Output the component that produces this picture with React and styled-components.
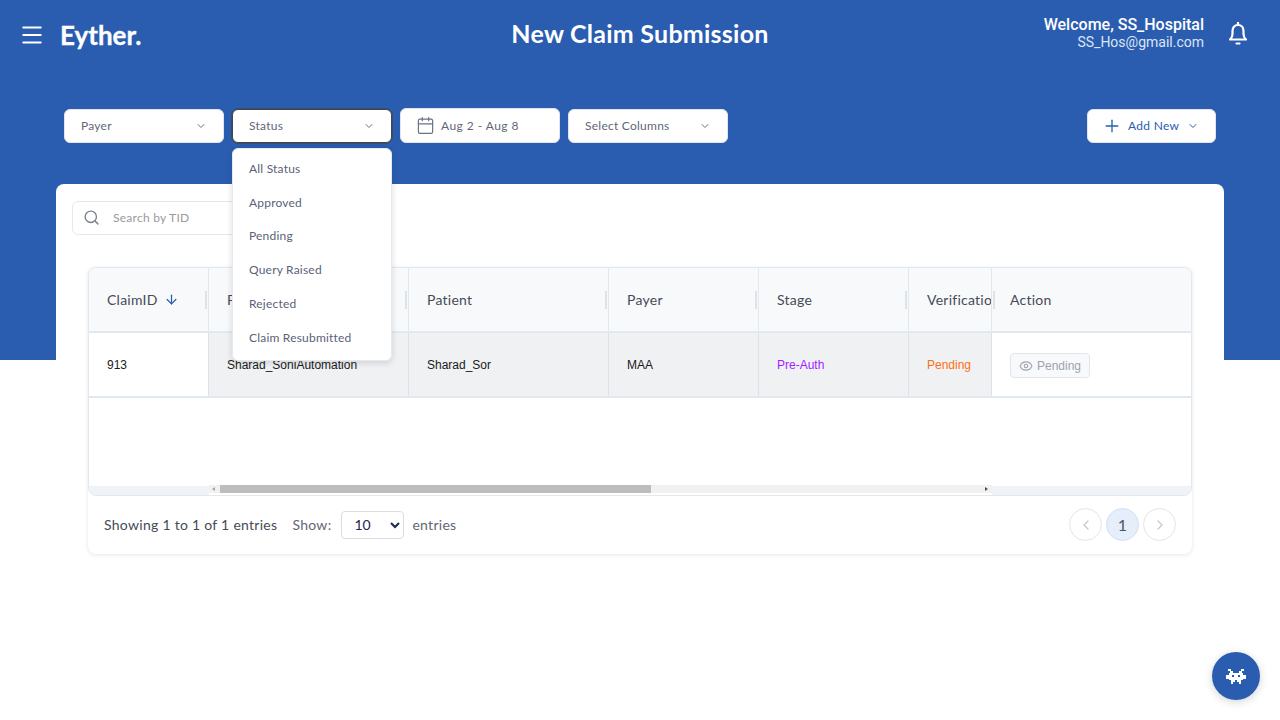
import React from 'react'
import styled, { createGlobalStyle } from 'styled-components'
import { Menu, ChevronDown, ChevronLeft, ChevronRight, Calendar, Plus, Search, ArrowDown, Eye } from 'lucide-react'

const BLUE = '#2a5db0'
const UI_FONT = '"Lato", "Noto Sans", sans-serif'

const GlobalStyle = createGlobalStyle`
  html, body { margin: 0; padding: 0; background: #fff; }
  * { box-sizing: border-box; }
`

const columns = [
  { label: 'ClaimID', sorted: true },
  { label: 'Provider' },
  { label: 'Patient' },
  { label: 'Payer' },
  { label: 'Stage' },
  { label: 'Verification', noResizer: true },
  { label: 'Action', noResizer: true, last: true },
]

const statusOptions = ['All Status', 'Approved', 'Pending', 'Query Raised', 'Rejected', 'Claim Resubmitted']

function BellIcon() {
  return (
    <svg width="18" height="23" viewBox="0 0 18 23" fill="none" stroke="#fff" strokeWidth="2.2" aria-hidden="true">
      <path d="M9 3C5.4 3 3.5 5.8 3.5 9v3c0 3-1 4.200-2.500 5.500h16c-1.500-1.300-2.500-2.500-2.500-5.500V9C14.500 5.800 12.600 3 9 3z" strokeLinejoin="round" />
      <path d="M9 0.500V3M7.500 21.500h3" strokeLinecap="round" />
    </svg>
  )
}

function Invader() {
  return (
    <svg width="20" height="15" viewBox="0 0 20 15" fill="#fff" aria-hidden="true">
      <path d="M2 0h3v2H2zM15 0h3v2h-3zM4 2h3v2H4zM13 2h3v2h-3zM3 4h14v2H3zM3 6h3v2H3zM8 6h4v2H8zM14 6h3v2h-3zM3 8h14v3H3zM0 6h3v4H0zM17 6h3v4h-3zM5 11h4v2H5zM11 11h4v2h-4zM5 13h2v2H5zM13 13h2v2h-2z" />
    </svg>
  )
}

export default function App() {
  return (
    <Page>
      <GlobalStyle />
      <Header>
        <Brand>
          <Menu size={26} color="#fff" strokeWidth={1.9} />
          <Logo>Eyther.</Logo>
        </Brand>
        <Title>New Claim Submission</Title>
        <UserArea>
          <UserText>
            <Welcome>Welcome, SS_Hospital</Welcome>
            <Email>SS_Hos@gmail.com</Email>
          </UserText>
          <BellIcon />
        </UserArea>
      </Header>

      <Filters>
        <FilterGroup>
          <Control>
            Payer
            <ChevronDown size={12} color="#6b7280" />
          </Control>
          <ControlWrap>
            <Control $focused>
              Status
              <ChevronDown size={12} color="#6b7280" />
            </Control>
            <Dropdown>
              {statusOptions.map((option) => (
                <DropdownItem key={option}>{option}</DropdownItem>
              ))}
            </Dropdown>
          </ControlWrap>
          <DateControl>
            <Calendar size={19} color="#6b7280" strokeWidth={1.5} />
            Aug 2 - Aug 8
          </DateControl>
          <Control>
            Select Columns
            <ChevronDown size={12} color="#6b7280" />
          </Control>
        </FilterGroup>
        <AddButton>
          <Plus size={20} color={BLUE} strokeWidth={1.6} />
          Add New
          <ChevronDown size={12} color={BLUE} />
        </AddButton>
      </Filters>

      <Card>
        <SearchBox>
          <Search size={17} color="#7b828e" />
          <span>Search by TID</span>
        </SearchBox>

        <TableCard>
          <Table>
            <HeadRow>
              {columns.map((col) => (
                <HeadCell key={col.label} $last={col.last}>
                  <HeadLabel>{col.label}</HeadLabel>
                  {col.sorted && <ArrowDown size={15} color={BLUE} />}
                  {!col.noResizer && <Resizer />}
                  {col.last && <Resizer $left />}
                </HeadCell>
              ))}
            </HeadRow>
            <BodyRow>
              <BodyCell>913</BodyCell>
              <BodyCell $shaded>Sharad_SoniAutomation</BodyCell>
              <BodyCell $shaded>Sharad_Sor</BodyCell>
              <BodyCell $shaded>MAA</BodyCell>
              <BodyCell $shaded $color="#a11fff">Pre-Auth</BodyCell>
              <BodyCell $shaded $color="#ff6f16">Pending</BodyCell>
              <BodyCell $last>
                <ActionButton>
                  <Eye size={14} color="#a0a7b4" />
                  Pending
                </ActionButton>
              </BodyCell>
            </BodyRow>
            <EmptySpace />
            <ScrollRow>
              <ScrollEdge />
              <ScrollTrack>
                <ScrollArrow $dir="left" />
                <ScrollThumb />
                <ScrollArrow $dir="right" />
              </ScrollTrack>
              <ScrollEdge />
            </ScrollRow>
          </Table>

          <Footer>
            <FooterLeft>
              <FooterText $dark>Showing 1 to 1 of 1 entries</FooterText>
              <ShowGroup>
                <FooterText>Show:</FooterText>
                <PageSize defaultValue="10">
                  <option value="10">10</option>
                  <option value="25">25</option>
                  <option value="50">50</option>
                </PageSize>
                <FooterText>entries</FooterText>
              </ShowGroup>
            </FooterLeft>
            <Pager>
              <PagerButton><ChevronLeft size={16} color="#c5cad3" /></PagerButton>
              <PagerCurrent>1</PagerCurrent>
              <PagerButton><ChevronRight size={16} color="#c5cad3" /></PagerButton>
            </Pager>
          </Footer>
        </TableCard>
      </Card>

      <ChatBubble>
        <Invader />
      </ChatBubble>
    </Page>
  )
}

const Page = styled.div`
  position: relative;
  width: 1280px;
  height: 720px;
  overflow: hidden;
  font-family: ${UI_FONT};
  background: linear-gradient(${BLUE} 360px, #fff 360px);
`

const Header = styled.header`
  display: grid;
  grid-template-columns: 1fr auto 1fr;
  align-items: center;
  height: 68px;
  padding: 2px 19px 0;
  color: #fff;
`

const Brand = styled.div`
  display: flex;
  align-items: center;
  gap: 15px;
`

const Logo = styled.div`
  font-size: 26px;
  font-weight: 700;
  -webkit-text-stroke: 0.3px #fff;
`

const Title = styled.h1`
  margin: 0 0 5px;
  font-size: 25px;
  font-weight: 700;
  letter-spacing: 0.25px;
`

const UserArea = styled.div`
  display: flex;
  justify-content: flex-end;
  align-items: center;
  gap: 25px;
  margin-right: 14px;
  svg { margin-bottom: 3px; }
`

const UserText = styled.div`
  margin-bottom: 4px;
  text-align: right;
  font-family: Roboto, sans-serif;
`

const Welcome = styled.div`
  font-size: 16px;
  font-weight: 500;
  line-height: 18px;
`

const Email = styled.div`
  font-size: 14px;
  line-height: 17px;
  color: #dbe5f5;
`

const Filters = styled.div`
  display: flex;
  justify-content: space-between;
  align-items: center;
  height: 35px;
  margin-top: 40px;
  padding: 0 64px;
`

const FilterGroup = styled.div`
  display: flex;
  align-items: center;
  gap: 8px;
`

const ControlWrap = styled.div`
  position: relative;
`

const Control = styled.div`
  display: flex;
  justify-content: space-between;
  align-items: center;
  width: 160px;
  height: 34px;
  padding: 0 16px;
  background: #fff;
  border: 1px solid ${(p) => (p.$focused ? '#3f4650' : '#dfe5ee')};
  outline: ${(p) => (p.$focused ? '1px solid rgba(63, 70, 80, 0.7)' : 'none')};
  border-radius: 6px;
  font-size: 12px;
  letter-spacing: 0.25px;
  color: #5f6775;
`

const DateControl = styled(Control)`
  justify-content: flex-start;
  gap: 6px;
  height: 35px;
  padding-left: 15px;
  letter-spacing: 0.45px;
`

const Dropdown = styled.ul`
  position: absolute;
  top: 39px;
  left: 0;
  z-index: 5;
  width: 160px;
  height: 213px;
  margin: 0;
  padding: 3px 0;
  list-style: none;
  background: #fff;
  border: 1px solid #e6eaf0;
  border-radius: 6px;
  box-shadow: 0 2px 6px rgba(30, 41, 59, 0.16);
`

const DropdownItem = styled.li`
  display: flex;
  align-items: center;
  height: 33.8px;
  padding-left: 16px;
  font-size: 12px;
  letter-spacing: 0.2px;
  color: #5b5f77;
`

const AddButton = styled.div`
  display: flex;
  align-items: center;
  gap: 6px;
  height: 34px;
  width: 129px;
  padding-left: 14px;
  background: #fff;
  border: 1px solid #dfe5ee;
  border-radius: 6px;
  font-size: 12px;
  letter-spacing: 0.3px;
  color: ${BLUE};
  svg:last-child { margin-left: 2px; }
`

const Card = styled.main`
  height: 400px;
  margin: 41px 56px 0;
  padding: 17px 16px;
  background: #fff;
  border-radius: 8px 8px 0 0;
`

const SearchBox = styled.div`
  display: flex;
  align-items: center;
  gap: 13px;
  width: 240px;
  height: 34px;
  padding: 0 0 1px 10px;
  border: 1px solid #e5e8ee;
  border-radius: 6px;
  font-size: 12px;
  letter-spacing: 0.25px;
  color: #9a9a9a;
`

const TableCard = styled.section`
  margin: 32px 16px 0;
  border-radius: 8px;
  box-shadow: 0 1px 4px rgba(30, 41, 59, 0.12);
`

const Table = styled.div`
  border: 1px solid #e2e8f0;
  border-radius: 8px;
  overflow: hidden;
`

const gridColumns = '120px 200px 200px 150px 150px 83px 1fr'

const HeadRow = styled.div`
  display: grid;
  grid-template-columns: ${gridColumns};
  height: 65px;
  background: #f8f9fb;
  border-bottom: 2px solid #e2e8f0;
`

const HeadCell = styled.div`
  position: relative;
  display: flex;
  align-items: center;
  gap: 6px;
  min-width: 0;
  padding-left: 18px;
  overflow: hidden;
  border-right: ${(p) => (p.$last ? 'none' : '1px solid #e2e8f0')};
  font-size: 14px;
  letter-spacing: 0.25px;
  color: #454b57;
`

const HeadLabel = styled.span`
  white-space: nowrap;
`

const Resizer = styled.span`
  position: absolute;
  ${(p) => (p.$left ? 'left: 1px;' : 'right: 1px;')}
  top: 23px;
  width: 2px;
  height: 18px;
  background: #dde3ea;
`

const BodyRow = styled.div`
  display: grid;
  grid-template-columns: ${gridColumns};
  height: 65px;
  border-bottom: 2px solid #e2e8f0;
`

const BodyCell = styled.div`
  display: flex;
  align-items: center;
  min-width: 0;
  padding-left: 18px;
  font-family: "Liberation Sans", Arial, sans-serif;
  font-size: 12px;
  white-space: nowrap;
  background: ${(p) => (p.$shaded ? '#f0f1f3' : '#fff')};
  border-right: ${(p) => (p.$last ? 'none' : '1px solid #dbe1e8')};
  color: ${(p) => p.$color || '#1a1a1a'};
`

const ActionButton = styled.div`
  display: flex;
  align-items: center;
  gap: 4px;
  width: 80px;
  height: 25px;
  margin-top: 2px;
  padding-left: 8px;
  background: #f8f9fb;
  border: 1px solid #e2e6ec;
  border-radius: 4px;
  color: #9ca3af;
`

const EmptySpace = styled.div`
  height: 87px;
`

const ScrollRow = styled.div`
  display: grid;
  grid-template-columns: 120px 783px 1fr;
  height: 10px;
`

const ScrollEdge = styled.div`
  margin-top: 1px;
  background: #eff3f8;
`

const ScrollTrack = styled.div`
  display: flex;
  align-items: flex-start;
  height: 8px;
  background: #f1f1f1;
`

const ScrollThumb = styled.div`
  width: 431px;
  height: 8px;
  margin-right: auto;
  background: #bdbdbd;
`

const ScrollArrow = styled.div`
  flex: none;
  width: 0;
  height: 0;
  margin-top: 2px;
  border-top: 2px solid transparent;
  border-bottom: 2px solid transparent;
  ${(p) =>
    p.$dir === 'left'
      ? 'border-right: 3px solid #a3a3a3; margin-left: 3px; margin-right: 5px;'
      : 'border-left: 3px solid #505050; margin-right: 4px;'}
`

const Footer = styled.div`
  display: flex;
  justify-content: space-between;
  align-items: center;
  height: 58px;
  padding: 0 16px 1px;
`

const FooterLeft = styled.div`
  display: flex;
  align-items: center;
  gap: 15px;
`

const ShowGroup = styled.div`
  display: flex;
  align-items: center;
  gap: 8px;
`

const FooterText = styled.span`
  font-size: 14px;
  letter-spacing: 0.28px;
  color: ${(p) => (p.$dark ? '#454b57' : '#5f6775')};
`

const PageSize = styled.select`
  width: 63px;
  height: 28px;
  margin-left: 2px;
  padding-left: 8px;
  font-family: ${UI_FONT};
  font-size: 14px;
  color: #1a2550;
  background: #fff;
  border: 1px solid #d8dde6;
  border-radius: 4px;
`

const Pager = styled.div`
  display: flex;
  align-items: center;
  gap: 4px;
`

const PagerButton = styled.div`
  display: flex;
  justify-content: center;
  align-items: center;
  width: 33px;
  height: 33px;
  border: 1px solid #e2e4ea;
  border-radius: 50%;
`

const PagerCurrent = styled(PagerButton)`
  font-size: 16px;
  color: #475569;
  background: #e6eef9;
  border-color: #cfe0f7;
`

const ChatBubble = styled.div`
  position: absolute;
  right: 20px;
  bottom: 20px;
  display: flex;
  justify-content: center;
  align-items: center;
  width: 48px;
  height: 48px;
  background: ${BLUE};
  border-radius: 50%;
  box-shadow: 0 2px 8px rgba(30, 41, 59, 0.2);
`
